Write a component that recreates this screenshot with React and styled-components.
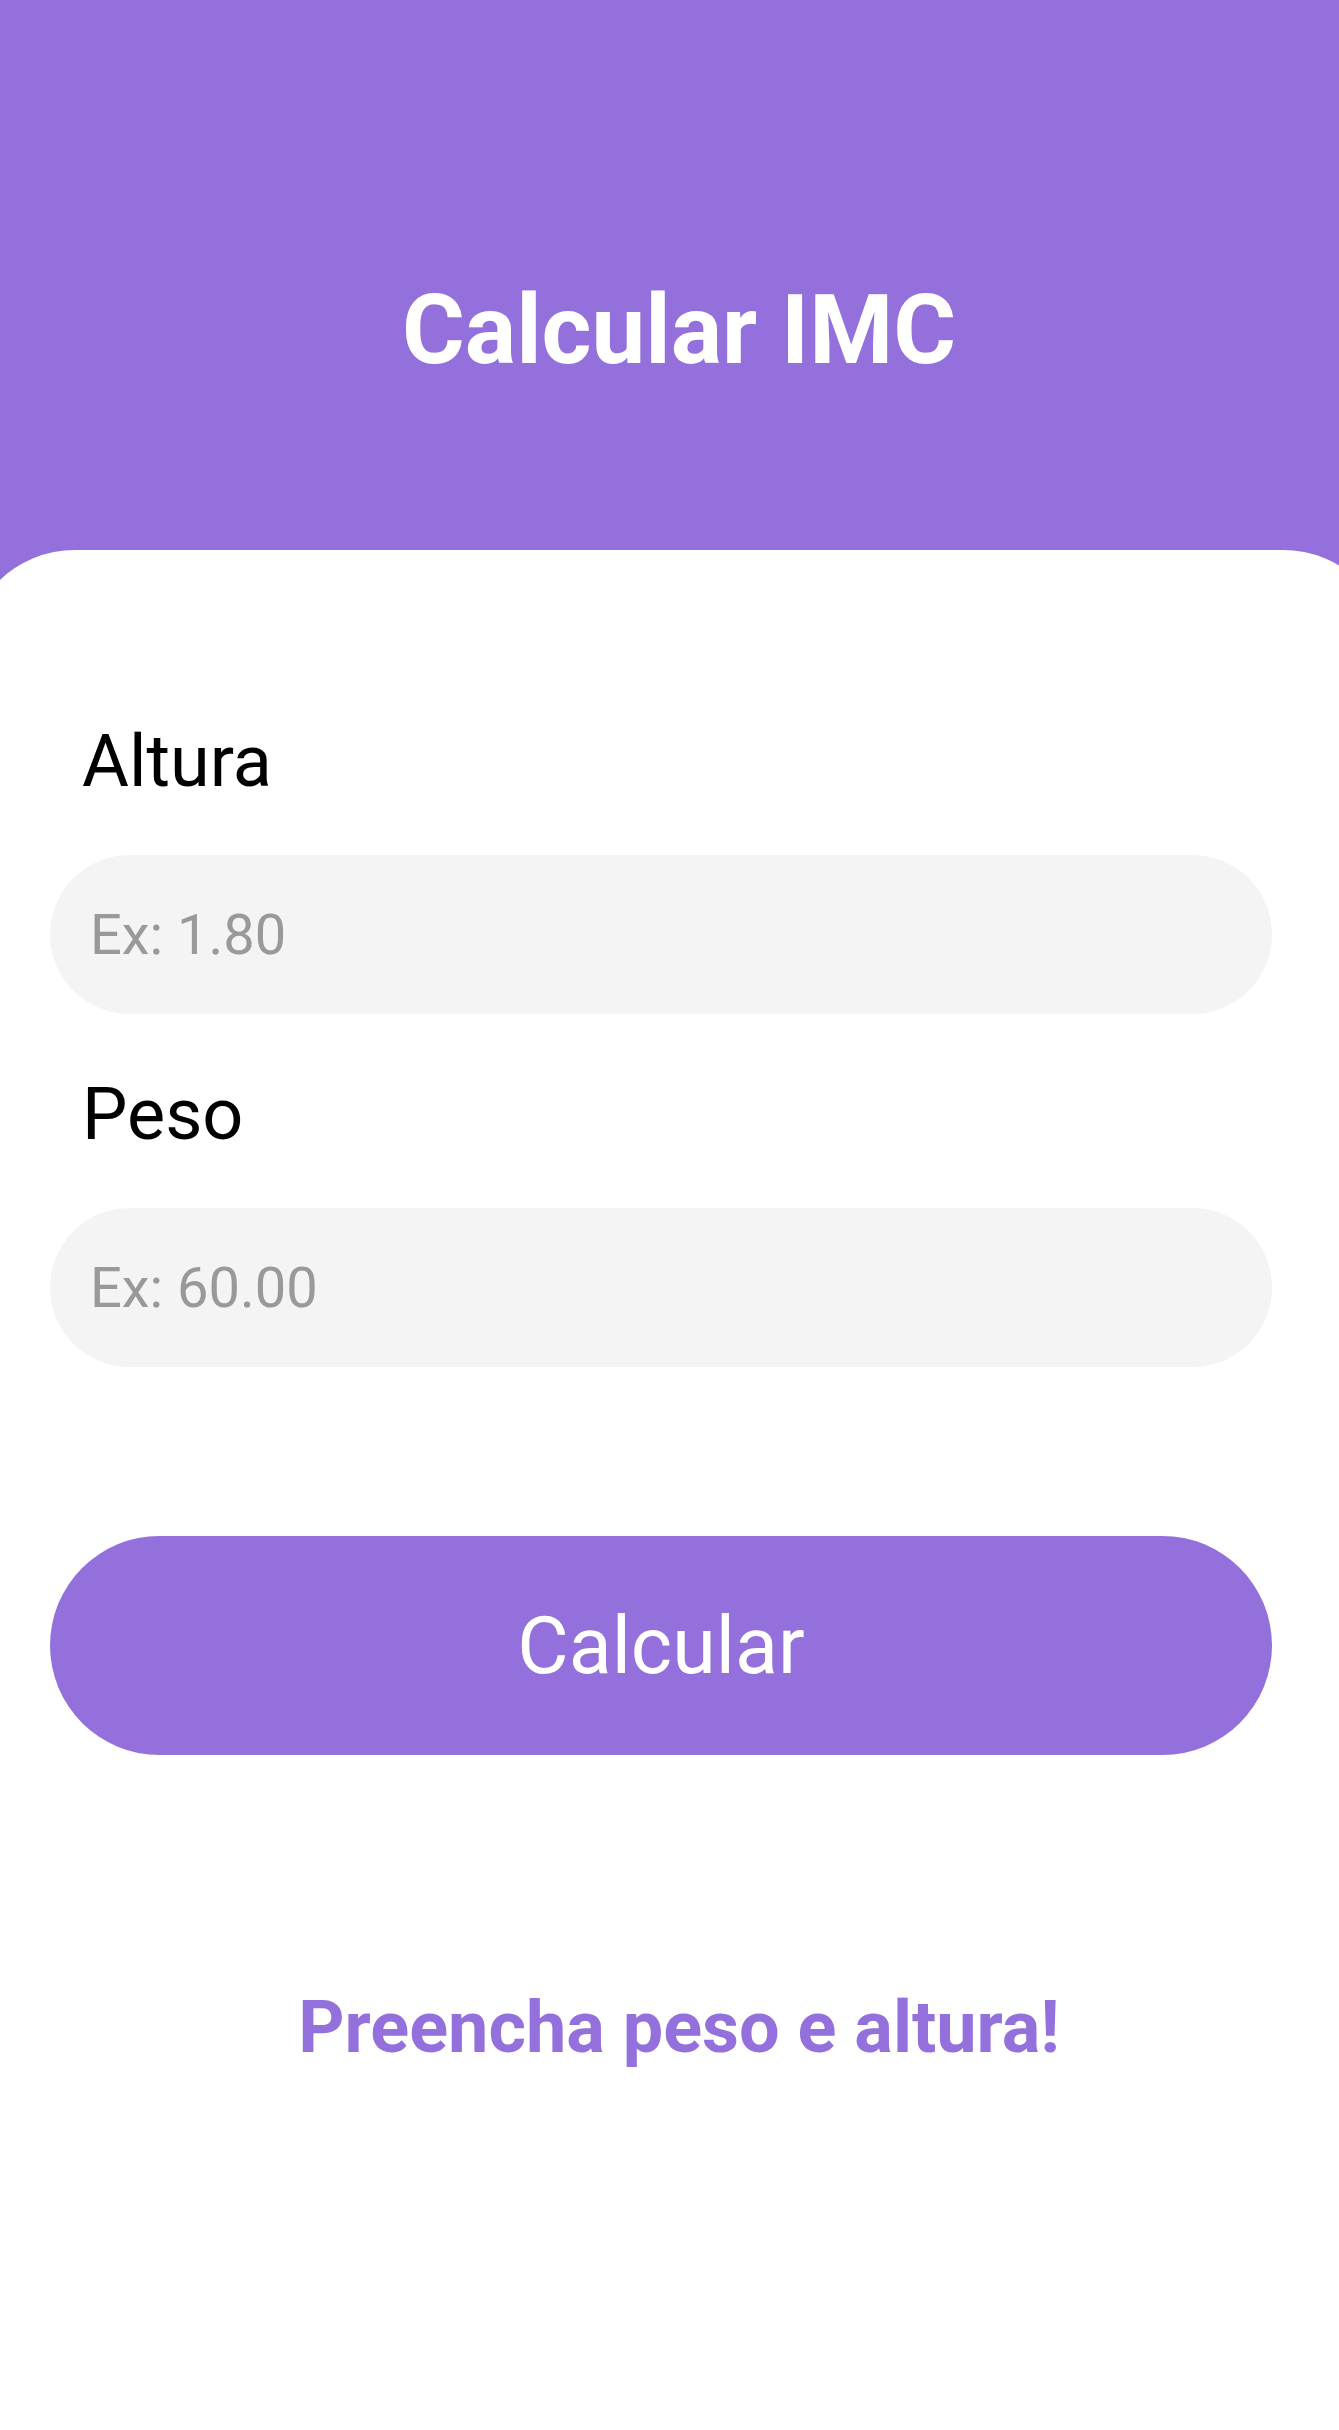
import styled, { createGlobalStyle } from "styled-components";

const GlobalStyle = createGlobalStyle`
  html, body {
    margin: 0;
    padding: 0;
    overflow-x: hidden;
    background: #ffffff;
    font-family: Roboto, "Liberation Sans", sans-serif;
  }
  * {
    box-sizing: border-box;
  }
`;

const PURPLE = "#9370db";

const Page = styled.div`
  min-height: 2430px;
  background: ${PURPLE};
  display: flex;
  flex-direction: column;
`;

const Header = styled.header`
  height: 550px;
  margin: 0 -53px 0 -34px;
  display: flex;
  align-items: center;
  justify-content: center;
  padding-top: 110px;
`;

const Title = styled.h1`
  margin: 0;
  color: #ffffff;
  font-size: 96px;
  font-weight: 700;
  line-height: 1;
`;

const Card = styled.main`
  flex: 1;
  margin: 0 -53px 0 -34px;
  background: #ffffff;
  border-radius: 109px 109px 0 0;
  padding: 170px 120px 0 84px;
  display: flex;
  flex-direction: column;
`;

const Form = styled.form`
  display: flex;
  flex-direction: column;
`;

const Label = styled.label`
  color: #000000;
  font-size: 72px;
  line-height: 83px;
  padding-left: 32px;
  margin-top: ${(p) => p.$top || 0}px;
`;

const Input = styled.input`
  margin-top: 52px;
  height: 159px;
  border: none;
  outline: none;
  border-radius: 80px;
  background: #f4f4f4;
  padding: 0 40px;
  font-family: Roboto, "Liberation Sans", sans-serif;
  font-size: 56px;
  color: #333333;

  &::placeholder {
    color: #999999;
  }
`;

const Button = styled.button`
  margin-top: 169px;
  height: 219px;
  border: none;
  border-radius: 110px;
  background: ${PURPLE};
  color: #ffffff;
  font-family: Roboto, "Liberation Sans", sans-serif;
  font-size: 79px;
  font-weight: 400;
  cursor: pointer;
`;

const Message = styled.p`
  margin: 229px -36px 0 0;
  text-align: center;
  color: ${PURPLE};
  font-size: 72px;
  font-weight: 700;
  line-height: 87px;
`;

export default function App() {
  return (
    <>
      <GlobalStyle />
      <Page>
        <Header>
          <Title>Calcular IMC</Title>
        </Header>
        <Card>
          <Form onSubmit={(e) => e.preventDefault()}>
            <Label>Altura</Label>
            <Input placeholder="Ex: 1.80" inputMode="decimal" />
            <Label $top={59}>Peso</Label>
            <Input placeholder="Ex: 60.00" inputMode="decimal" />
            <Button type="submit">Calcular</Button>
          </Form>
          <Message>Preencha peso e altura!</Message>
        </Card>
      </Page>
    </>
  );
}
